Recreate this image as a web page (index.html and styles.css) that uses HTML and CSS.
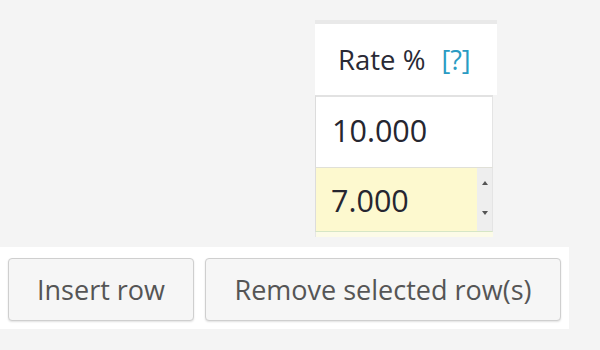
FILE: index.html
```html
<!DOCTYPE html>
<html>
<head>
<meta charset="utf-8">
<link rel="stylesheet" href="styles.css">
</head>
<body>
<div class="page">
  <div class="grid-area">
    <div class="column">
      <div class="col-head">
        <span class="head-label">Rate %</span>
        <span class="help">[?]</span>
      </div>
      <div class="cell cell-first">10.000</div>
      <div class="cell cell-active">
        <span class="cell-value">7.000</span>
        <span class="spinner">
          <span class="arrow arrow-up"></span>
          <span class="arrow arrow-down"></span>
        </span>
      </div>
      <div class="cell-tail"></div>
    </div>
  </div>
  <div class="actions">
    <button class="btn btn-insert">Insert row</button>
    <button class="btn btn-remove">Remove selected row(s)</button>
  </div>
</div>
</body>
</html>
```
FILE: styles.css
```css
html, body {
  margin: 0;
  padding: 0;
  background: #f4f4f4;
  font-family: "Open Sans", "DejaVu Sans", sans-serif;
}
.page {
  width: 600px;
  height: 350px;
  padding-top: 20px;
  box-sizing: border-box;
}
.grid-area {
  display: flex;
  padding-left: 315px;
  height: 218px;
}
.column {
  width: 182px;
  display: flex;
  flex-direction: column;
}
.col-head {
  height: 71px;
  border-top: 4px solid #e9e9e9;
  background: #fff;
  display: flex;
  align-items: center;
  padding-left: 23px;
  box-sizing: content-box;
  gap: 16px;
}
.head-label {
  font-size: 27.5px;
  color: #2a2a35;
}
.help {
  font-size: 27px;
  color: #2a9bc3;
}
.cell {
  width: 178px;
  box-sizing: border-box;
  border-left: 1px solid #dcdcdc;
  border-right: 1px solid #e4e4e4;
  border-top: 2px solid #e2e2e2;
  background: #fff;
  height: 72px;
  display: flex;
  align-items: center;
  padding-left: 16px;
  font-size: 30.5px;
  color: #262630;
}
.cell-first {
  padding-bottom: 4px;
}
.cell-active {
  background: #fdf9cf;
  border-top: 1px solid #e0e0d8;
  height: 65px;
  padding-right: 0;
  border-bottom: 1px solid #d6e6c6;
  justify-content: space-between;
  align-items: stretch;
  padding-left: 15px;
}
.cell-value {
  display: flex;
  align-items: center;
}
.spinner {
  width: 15px;
  background: #eeeeee;
  display: flex;
  flex-direction: column;
  justify-content: space-between;
  align-items: center;
  padding: 13px 0 16px;
}
.arrow {
  width: 0;
  height: 0;
  border-left: 3px solid transparent;
  border-right: 3px solid transparent;
}
.arrow-up {
  border-bottom: 4px solid #555;
}
.arrow-down {
  border-top: 4px solid #555;
}
.cell-tail {
  width: 178px;
  height: 5px;
  background: #fcfbe8;
  border-left: 1px solid #e6e6e6;
  box-sizing: border-box;
}
.actions {
  margin-top: 9px;
  width: 569px;
  height: 82px;
  background: #fff;
  box-sizing: border-box;
  padding: 11px 8px 8px 8px;
  display: flex;
  gap: 11px;
}
.btn {
  height: 63px;
  border: 1px solid #cfcfcf;
  border-radius: 4px;
  background: #f6f6f6;
  box-shadow: 0 1px 2px rgba(0,0,0,0.12);
  font-family: "Open Sans", "DejaVu Sans", sans-serif;
  font-size: 27px;
  color: #555;
  padding: 0;
  cursor: pointer;
}
.btn-insert {
  width: 186px;
}
.btn-remove {
  width: 356px;
}
```
